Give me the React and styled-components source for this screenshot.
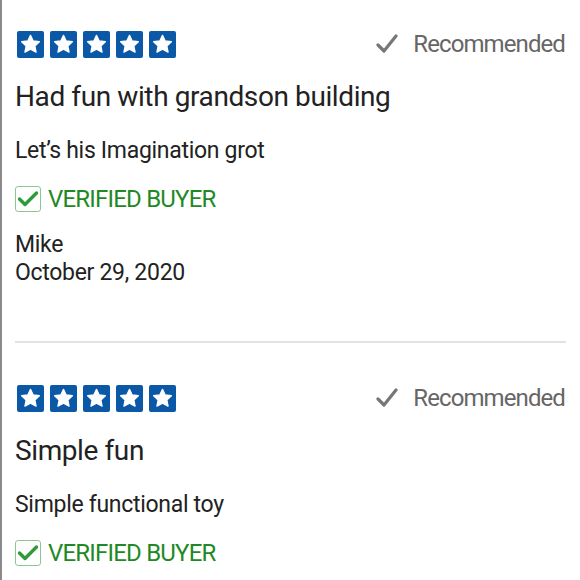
import React from "react";
import styled, { createGlobalStyle } from "styled-components";

const Global = createGlobalStyle`
  html, body { margin: 0; padding: 0; background: #fff; }
  body { font-family: Roboto, "Liberation Sans", sans-serif; color: #222; }
`;

const Page = styled.div`
  width: 580px;
  height: 580px;
  box-sizing: border-box;
  border-left: 2px solid #8a8a8a;
  padding: 0 14px 0 13px;
  overflow: hidden;
`;

const Review = styled.section`
  padding-top: ${(p) => p.$top}px;
  padding-bottom: 54px;
  border-bottom: ${(p) => (p.$divider ? "2px solid #e2e2e2" : "none")};
`;

const TopRow = styled.div`
  display: flex;
  align-items: center;
  justify-content: space-between;
  height: 28px;
`;

const Stars = styled.div`
  display: flex;
  gap: 6px;
  padding-left: 2px;
`;

const StarBox = styled.span`
  width: 27px;
  height: 27px;
  border-radius: 2px;
  background: #0b58a6;
  display: flex;
  align-items: center;
  justify-content: center;
`;

const Recommend = styled.div`
  display: flex;
  align-items: center;
  gap: 15px;
  padding-right: 1px;
  font-size: 24px;
  color: #666;
  letter-spacing: -0.9px;
`;

const Title = styled.h2`
  margin: 22px 0 0 0;
  font-size: 28px;
  font-weight: 400;
  line-height: 34px;
  color: #222;
  letter-spacing: -0.4px;
`;

const Body = styled.p`
  margin: 23px 0 0 0;
  font-size: 23px;
  line-height: 28px;
  color: #222;
  letter-spacing: -0.3px;
`;

const Verified = styled.div`
  margin: 20px 0 0 0;
  display: flex;
  align-items: center;
  gap: 7px;
  font-size: 24px;
  color: #1f8a24;
  letter-spacing: -0.8px;
`;

const CheckBox = styled.span`
  width: 24px;
  height: 24px;
  border: 1px solid #8cc78f;
  border-radius: 3px;
  display: flex;
  align-items: center;
  justify-content: center;
`;

const Meta = styled.div`
  margin: 18px 0 0 0;
  font-size: 23px;
  line-height: 28px;
  color: #222;
  letter-spacing: -0.3px;
`;

const Star = () => (
  <svg width="21" height="20" viewBox="0 0 24 23">
    <path
      d="M12 1.5l3.1 6.5 7.1.9-5.2 4.9 1.4 7.1L12 17.4l-6.4 3.5 1.4-7.1L1.8 8.9l7.1-.9z"
      fill="#fff"
      stroke="#fff"
      strokeWidth="1.5"
      strokeLinejoin="round"
    />
  </svg>
);

const GrayCheck = () => (
  <svg width="22" height="20" viewBox="0 0 22 20">
    <path d="M2 11l6 6L20 2" fill="none" stroke="#777" strokeWidth="3.2" strokeLinecap="round" strokeLinejoin="round" />
  </svg>
);

const GreenCheck = () => (
  <svg width="22" height="18" viewBox="0 0 22 18">
    <path d="M2.5 9l5.5 5.5L19.5 3" fill="none" stroke="#2e9b3a" strokeWidth="3.4" strokeLinecap="round" strokeLinejoin="round" />
  </svg>
);

const reviews = [
  {
    title: "Had fun with grandson building",
    body: "Let’s his Imagination grot",
    name: "Mike",
    date: "October 29, 2020",
  },
  {
    title: "Simple fun",
    body: "Simple functional toy",
    name: "",
    date: "",
  },
];

export default function App() {
  return (
    <Page>
      <Global />
      {reviews.map((r, i) => (
        <Review key={i} $top={i === 0 ? 30 : 41} $divider={i === 0}>
          <TopRow>
            <Stars>
              {[0, 1, 2, 3, 4].map((s) => (
                <StarBox key={s}>
                  <Star />
                </StarBox>
              ))}
            </Stars>
            <Recommend>
              <GrayCheck />
              Recommended
            </Recommend>
          </TopRow>
          <Title>{r.title}</Title>
          <Body>{r.body}</Body>
          <Verified>
            <CheckBox>
              <GreenCheck />
            </CheckBox>
            VERIFIED BUYER
          </Verified>
          {r.name && (
            <Meta>
              {r.name}
              <br />
              {r.date}
            </Meta>
          )}
        </Review>
      ))}
    </Page>
  );
}
